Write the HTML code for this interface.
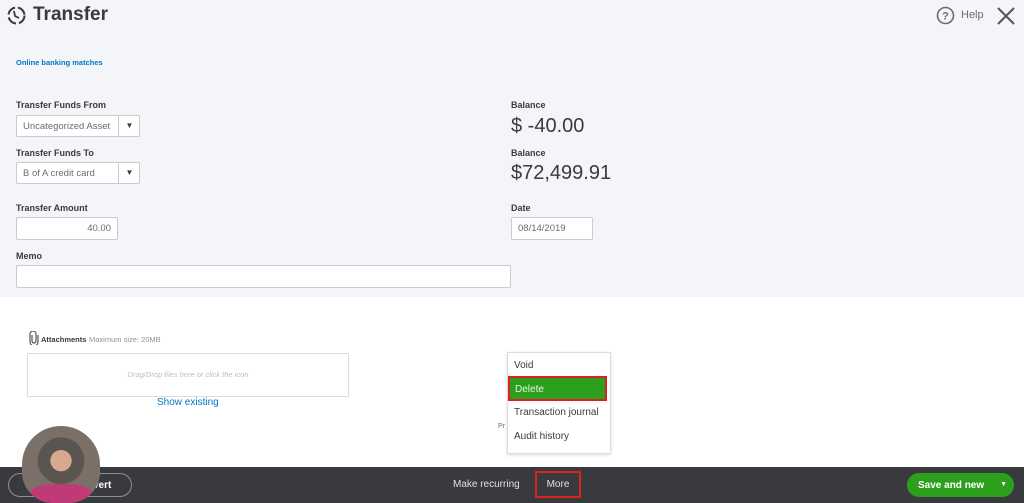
<!DOCTYPE html>
<html><head><meta charset="utf-8"><style>
*{box-sizing:border-box;margin:0;padding:0}
body{width:1024px;height:503px;overflow:hidden;font-family:"Liberation Sans",sans-serif;background:#fff;position:relative;color:#393a3d}
.top{position:absolute;left:0;top:0;width:1024px;height:297px;background:#f4f5f8}
.a{position:absolute}
.lbl{font-size:9px;font-weight:bold;color:#393a3d}
.box{position:absolute;background:#fff;border:1px solid #c9cbcf;border-radius:2px;font-size:9.5px;color:#6b6c72;padding-left:6px;display:flex;align-items:center}
.big{font-size:20px;color:#393a3d}
.foot{position:absolute;left:0;top:467px;width:1024px;height:36px;background:#393a3d}
</style></head><body>
<div class="top"></div>
<svg class="a" style="left:6px;top:5px" width="21" height="21" viewBox="0 0 21 21"><circle cx="10.5" cy="10.5" r="8" fill="none" stroke="#393a3d" stroke-width="2" stroke-dasharray="10 3"/><path d="M8 6 L9 11 L13 13" fill="none" stroke="#393a3d" stroke-width="1.8"/></svg>
<div class="a" style="left:33px;top:4px;font-size:19px;font-weight:bold">Transfer</div>
<svg class="a" style="left:936px;top:6px" width="19" height="19"><circle cx="9.5" cy="9.5" r="8" fill="none" stroke="#6b6c72" stroke-width="1.6"/><text x="9.5" y="13.5" font-size="11" font-weight="bold" text-anchor="middle" fill="#6b6c72" font-family="Liberation Sans">?</text></svg>
<div class="a" style="left:961px;top:9px;font-size:11px;color:#6b6c72">Help</div>
<svg class="a" style="left:997px;top:7px" width="18" height="18"><path d="M1 1L17 17M17 1L1 17" stroke="#555" stroke-width="2"/></svg>
<div class="a" style="left:16px;top:58px;font-size:7.5px;color:#0077c5;font-weight:bold">Online banking matches</div>
<div class="a lbl" style="left:16px;top:100px">Transfer Funds From</div>
<div class="box" style="left:16px;top:115px;width:124px;height:22px">Uncategorized Asset<span style="position:absolute;left:101px;top:0;bottom:0;border-left:1px solid #c9cbcf;width:22px;text-align:center;line-height:20px;color:#393a3d;font-size:8px">▼</span></div>
<div class="a lbl" style="left:16px;top:148px">Transfer Funds To</div>
<div class="box" style="left:16px;top:162px;width:124px;height:22px">B of A credit card<span style="position:absolute;left:101px;top:0;bottom:0;border-left:1px solid #c9cbcf;width:22px;text-align:center;line-height:20px;color:#393a3d;font-size:8px">▼</span></div>
<div class="a lbl" style="left:16px;top:203px">Transfer Amount</div>
<div class="box" style="left:16px;top:217px;width:102px;height:23px;justify-content:flex-end;padding-right:6px">40.00</div>
<div class="a lbl" style="left:16px;top:251px">Memo</div>
<div class="box" style="left:16px;top:265px;width:495px;height:23px"></div>
<div class="a lbl" style="left:511px;top:100px">Balance</div>
<div class="a big" style="left:511px;top:115px">$ -40.00</div>
<div class="a lbl" style="left:511px;top:148px">Balance</div>
<div class="a big" style="left:511px;top:162px">$72,499.91</div>
<div class="a lbl" style="left:511px;top:203px">Date</div>
<div class="box" style="left:511px;top:217px;width:82px;height:23px">08/14/2019</div>
<svg class="a" style="left:29px;top:331px" width="10" height="14"><path d="M3 4V10a2 2 0 0 0 4 0V3a3 3 0 0 0-6 0v8a4 4 0 0 0 8 0V4" fill="none" stroke="#555" stroke-width="1.2"/></svg>
<div class="a" style="left:41px;top:335px;font-size:7.5px;font-weight:bold">Attachments</div>
<div class="a" style="left:89px;top:335px;font-size:7.5px;color:#8d9096">Maximum size: 20MB</div>
<div class="a" style="left:27px;top:353px;width:322px;height:44px;border:1px solid #dcdde0;font-size:7.5px;font-style:italic;color:#babec5;text-align:center;line-height:42px">Drag/Drop files here or click the icon</div>
<div class="a" style="left:157px;top:397px;font-size:10px;color:#0077c5">Show existing</div>
<div class="a" style="left:498px;top:423px;font-size:7px;color:#6b6c72">Pr</div>
<div class="a" style="left:507px;top:352px;width:104px;height:102px;background:#fff;border:1px solid #dcdde0;box-shadow:0 1px 3px rgba(0,0,0,.15)"></div>
<div class="a" style="left:514px;top:360px;font-size:10px">Void</div>
<div class="a" style="left:508px;top:376px;width:99px;height:25px;background:#2ca01c;border:2px solid #e02020;font-size:10px;color:#e6f5e3;padding:6px 0 0 5px">Delete</div>
<div class="a" style="left:514px;top:407px;font-size:10px">Transaction journal</div>
<div class="a" style="left:514px;top:431px;font-size:10px">Audit history</div>
<div class="foot"></div>
<div class="a" style="left:8px;top:473px;width:124px;height:24px;border:1px solid #8d9096;border-radius:12px;color:#fff;font-size:10px;font-weight:bold;padding:6px 0 0 84px">vert</div>
<div class="a" style="left:22px;top:426px;width:78px;height:77px;border-radius:50% 50% 40% 40%;background:radial-gradient(circle at 50% 45%,#d8a890 0 18%,#5a5550 19% 40%,#7a7068 41% 100%);overflow:hidden"><div style="position:absolute;left:8px;top:58px;width:62px;height:24px;background:#c03a78;border-radius:40% 40% 0 0"></div></div>
<div class="a" style="left:453px;top:479px;font-size:10px;color:#e0e0e0">Make recurring</div>
<div class="a" style="left:535px;top:471px;width:46px;height:27px;border:2px solid #e02020;font-size:10px;color:#e0e0e0;text-align:center;line-height:23px">More</div>
<div class="a" style="left:907px;top:473px;width:107px;height:24px;background:#2ca01c;border-radius:12px;color:#fff;font-size:10px;font-weight:bold;padding:7px 0 0 11px">Save and new<span style="position:absolute;right:7px;top:8px;font-size:7px">▼</span></div>
</body></html>
